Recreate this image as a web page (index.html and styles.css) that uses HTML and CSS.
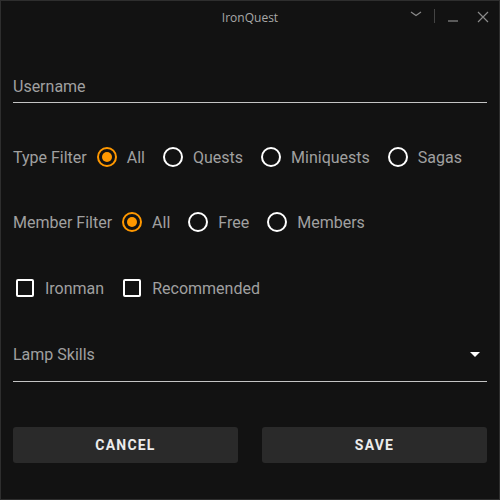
FILE: index.html
```html
<!DOCTYPE html>
<html>
<head>
<meta charset="utf-8">
<link rel="stylesheet" href="styles.css">
</head>
<body>
<div class="window">
  <div class="titlebar">
    <span class="title">IronQuest</span>
    <div class="controls">
      <svg class="ctl" width="12" height="8" viewBox="0 0 12 8"><polyline points="1,2 6,5.5 11,2" fill="none" stroke="#8a8a8a" stroke-width="1.2"/></svg>
      <span class="divider"></span>
      <svg class="ctl" width="12" height="14" viewBox="0 0 12 14"><line x1="1" y1="12" x2="11" y2="12" stroke="#8a8a8a" stroke-width="1.2"/></svg>
      <svg class="ctl" width="12" height="12" viewBox="0 0 12 12"><path d="M1 1 L11 11 M11 1 L1 11" stroke="#8a8a8a" stroke-width="1.2" fill="none"/></svg>
    </div>
  </div>
  <div class="form">
    <div class="text-field username">Username</div>

    <div class="row type-row">
      <span class="row-label">Type Filter</span>
      <span class="opt"><span class="radio checked"></span>All</span>
      <span class="opt"><span class="radio"></span>Quests</span>
      <span class="opt"><span class="radio"></span>Miniquests</span>
      <span class="opt"><span class="radio"></span>Sagas</span>
    </div>

    <div class="row member-row">
      <span class="row-label">Member Filter</span>
      <span class="opt"><span class="radio checked"></span>All</span>
      <span class="opt"><span class="radio"></span>Free</span>
      <span class="opt"><span class="radio"></span>Members</span>
    </div>

    <div class="row check-row">
      <span class="copt"><span class="checkbox"></span>Ironman</span>
      <span class="copt"><span class="checkbox"></span>Recommended</span>
    </div>

    <div class="text-field select">
      <span>Lamp Skills</span>
      <svg class="arrow" width="10" height="5" viewBox="0 0 10 5"><polygon points="0,0 10,0 5,5" fill="#fff"/></svg>
    </div>

    <div class="buttons">
      <button class="btn">CANCEL</button>
      <button class="btn">SAVE</button>
    </div>
  </div>
</div>
</body>
</html>
```

FILE: styles.css
```css
* { box-sizing: border-box; }
html, body { margin: 0; padding: 0; background: #121212; }
.window {
  width: 500px;
  height: 500px;
  border: 1px solid #2e2e2e;
  background: #121212;
  font-family: Roboto, "Liberation Sans", sans-serif;
  color: #a0a0a0;
  display: flex;
  flex-direction: column;
}
.titlebar {
  height: 32px;
  display: flex;
  align-items: center;
  justify-content: center;
  position: relative;
}
.title {
  font-family: "Open Sans", "Noto Sans", sans-serif;
  font-size: 12px;
  color: #a8a8a8;
}
.controls {
  position: absolute;
  right: 10px;
  top: 0;
  height: 32px;
  display: flex;
  align-items: flex-start;
}
.ctl { display: block; }
.controls .ctl:nth-child(1) { margin-top: 9px; }
.divider {
  width: 1px;
  height: 14px;
  background: #444;
  margin: 8px 12px 0 12px;
}
.controls .ctl:nth-child(3) { margin-top: 8px; }
.controls .ctl:nth-child(4) { margin-top: 10px; margin-left: 18px; }
.form {
  padding: 0 12px;
  display: flex;
  flex-direction: column;
  font-size: 16px;
}
.text-field {
  line-height: 19px;
  border-bottom: 1px solid #c4c4c4;
}
.username {
  margin-top: 44px;
  padding-bottom: 6px;
}
.row {
  display: flex;
  align-items: center;
  height: 24px;
  line-height: 19px;
}
.type-row { margin-top: 42px; }
.member-row { margin-top: 41px; }
.check-row { margin-top: 42px; }
.row-label { margin-right: 10px; }
.opt {
  display: flex;
  align-items: center;
  margin-right: 18px;
}
.radio {
  width: 20px;
  height: 20px;
  border: 2px solid #fff;
  border-radius: 50%;
  margin-right: 10px;
  display: flex;
  align-items: center;
  justify-content: center;
}
.radio.checked { border-color: #ff9800; }
.radio.checked::after {
  content: "";
  width: 10px;
  height: 10px;
  border-radius: 50%;
  background: #ff9800;
}
.copt {
  display: flex;
  align-items: center;
  margin-left: 3px;
  margin-right: 16px;
}
.checkbox {
  width: 18px;
  height: 18px;
  border: 2px solid #fff;
  border-radius: 2px;
  margin-right: 11px;
}
.select {
  margin-top: 45px;
  padding-bottom: 17px;
  display: flex;
  align-items: center;
  justify-content: space-between;
}
.arrow { margin-right: 7px; }
.buttons {
  margin-top: 45px;
  display: flex;
  justify-content: space-between;
}
.btn {
  width: 225px;
  height: 36px;
  border: none;
  border-radius: 3px;
  background: #2a2a2a;
  color: #ececec;
  font-family: Roboto, "Liberation Sans", sans-serif;
  font-weight: 700;
  font-size: 14px;
  letter-spacing: 1.2px;
  padding: 0;
}
```
